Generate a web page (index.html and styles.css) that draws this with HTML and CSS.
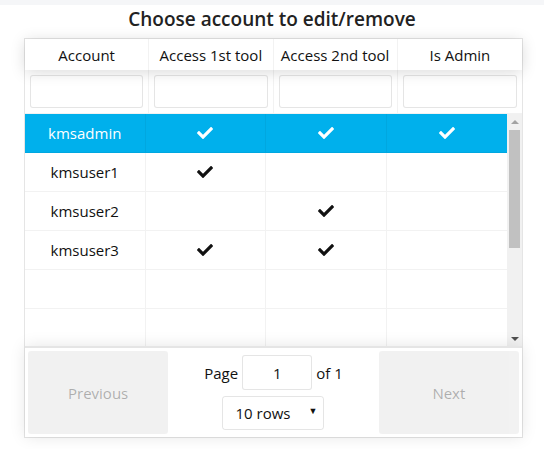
FILE: index.html
```html
<!DOCTYPE html>
<html>
<head>
<meta charset="utf-8">
<link rel="stylesheet" href="styles.css">
</head>
<body>
<div class="topbar"></div>
<h1 class="title">Choose account to edit/remove</h1>
<div class="table">
  <div class="thead">
    <div class="th">Account</div>
    <div class="th">Access 1st tool</div>
    <div class="th">Access 2nd tool</div>
    <div class="th">Is Admin</div>
  </div>
  <div class="filters">
    <div class="fc"><input class="finput" type="text"></div>
    <div class="fc"><input class="finput" type="text"></div>
    <div class="fc"><input class="finput" type="text"></div>
    <div class="fc"><input class="finput" type="text"></div>
  </div>
  <div class="tbody">
    <div class="rows">
      <div class="tr selected">
        <div class="td">kmsadmin</div>
        <div class="td"><svg class="check" viewBox="0 0 512 400"><path d="M173.898 375.404l-166.4-166.4c-9.997-9.997-9.997-26.206 0-36.204l36.203-36.204c9.997-9.998 26.207-9.998 36.204 0L192 248.69 432.095 8.596c9.997-9.997 26.207-9.997 36.204 0l36.203 36.204c9.997 9.997 9.997 26.206 0 36.204l-294.4 294.401c-9.998 9.997-26.207 9.997-36.204-.001z"/></svg></div>
        <div class="td"><svg class="check" viewBox="0 0 512 400"><path d="M173.898 375.404l-166.4-166.4c-9.997-9.997-9.997-26.206 0-36.204l36.203-36.204c9.997-9.998 26.207-9.998 36.204 0L192 248.69 432.095 8.596c9.997-9.997 26.207-9.997 36.204 0l36.203 36.204c9.997 9.997 9.997 26.206 0 36.204l-294.4 294.401c-9.998 9.997-26.207 9.997-36.204-.001z"/></svg></div>
        <div class="td"><svg class="check" viewBox="0 0 512 400"><path d="M173.898 375.404l-166.4-166.4c-9.997-9.997-9.997-26.206 0-36.204l36.203-36.204c9.997-9.998 26.207-9.998 36.204 0L192 248.69 432.095 8.596c9.997-9.997 26.207-9.997 36.204 0l36.203 36.204c9.997 9.997 9.997 26.206 0 36.204l-294.4 294.401c-9.998 9.997-26.207 9.997-36.204-.001z"/></svg></div>
      </div>
      <div class="tr">
        <div class="td">kmsuser1</div>
        <div class="td"><svg class="check" viewBox="0 0 512 400"><path d="M173.898 375.404l-166.4-166.4c-9.997-9.997-9.997-26.206 0-36.204l36.203-36.204c9.997-9.998 26.207-9.998 36.204 0L192 248.69 432.095 8.596c9.997-9.997 26.207-9.997 36.204 0l36.203 36.204c9.997 9.997 9.997 26.206 0 36.204l-294.4 294.401c-9.998 9.997-26.207 9.997-36.204-.001z"/></svg></div>
        <div class="td"></div>
        <div class="td"></div>
      </div>
      <div class="tr">
        <div class="td">kmsuser2</div>
        <div class="td"></div>
        <div class="td"><svg class="check" viewBox="0 0 512 400"><path d="M173.898 375.404l-166.4-166.4c-9.997-9.997-9.997-26.206 0-36.204l36.203-36.204c9.997-9.998 26.207-9.998 36.204 0L192 248.69 432.095 8.596c9.997-9.997 26.207-9.997 36.204 0l36.203 36.204c9.997 9.997 9.997 26.206 0 36.204l-294.4 294.401c-9.998 9.997-26.207 9.997-36.204-.001z"/></svg></div>
        <div class="td"></div>
      </div>
      <div class="tr">
        <div class="td">kmsuser3</div>
        <div class="td"><svg class="check" viewBox="0 0 512 400"><path d="M173.898 375.404l-166.4-166.4c-9.997-9.997-9.997-26.206 0-36.204l36.203-36.204c9.997-9.998 26.207-9.998 36.204 0L192 248.69 432.095 8.596c9.997-9.997 26.207-9.997 36.204 0l36.203 36.204c9.997 9.997 9.997 26.206 0 36.204l-294.4 294.401c-9.998 9.997-26.207 9.997-36.204-.001z"/></svg></div>
        <div class="td"><svg class="check" viewBox="0 0 512 400"><path d="M173.898 375.404l-166.4-166.4c-9.997-9.997-9.997-26.206 0-36.204l36.203-36.204c9.997-9.998 26.207-9.998 36.204 0L192 248.69 432.095 8.596c9.997-9.997 26.207-9.997 36.204 0l36.203 36.204c9.997 9.997 9.997 26.206 0 36.204l-294.4 294.401c-9.998 9.997-26.207 9.997-36.204-.001z"/></svg></div>
        <div class="td"></div>
      </div>
      <div class="tr"><div class="td"></div><div class="td"></div><div class="td"></div><div class="td"></div></div>
      <div class="tr"><div class="td"></div><div class="td"></div><div class="td"></div><div class="td"></div></div>
      <div class="tr"><div class="td"></div><div class="td"></div><div class="td"></div><div class="td"></div></div>
    </div>
    <div class="scrollbar">
      <div class="sb-btn"><span class="tri-up"></span></div>
      <div class="sb-track"><div class="sb-thumb"></div></div>
      <div class="sb-btn"><span class="tri-down"></span></div>
    </div>
  </div>
  <div class="pagination">
    <div class="pside"><button class="pbtn" disabled>Previous</button></div>
    <div class="pcenter">
      <div class="pinfo">Page <input class="pjump" type="text" value="1"> of 1</div>
      <div class="psize"><span>10 rows</span><span class="arrow">▼</span></div>
    </div>
    <div class="pside"><button class="pbtn" disabled>Next</button></div>
  </div>
</div>
</body>
</html>
```

FILE: styles.css
```css
* { box-sizing: border-box; }
html, body { margin: 0; padding: 0; background: #fff; }
body {
  font-family: "Open Sans", "Noto Sans", sans-serif;
  font-size: 15px;
  color: #000;
  width: 544px;
  height: 449px;
  overflow: hidden;
}
.topbar { height: 5px; background: #f5f6f8; }
.title {
  margin: 0;
  padding: 1px 0 6px;
  font-size: 19px;
  font-weight: 600;
  line-height: 26px;
  text-align: center;
  color: #222;
}
.table {
  margin-left: 24px;
  width: 499px;
  border: 1px solid rgba(0,0,0,0.1);
  display: flex;
  flex-direction: column;
}
.thead {
  display: grid;
  grid-template-columns: repeat(4, 1fr);
  height: 31px;
  position: relative;
  z-index: 2;
  background: #fff;
  box-shadow: 0 2px 15px 0 rgba(0,0,0,0.15);
}
.th {
  display: flex;
  align-items: center;
  justify-content: center;
  border-right: 1px solid rgba(0,0,0,0.05);
  white-space: nowrap;
  color: #111;
}
.th:last-child { border-right: 0; }
.filters {
  display: grid;
  grid-template-columns: repeat(4, 1fr);
  border-bottom: 1px solid rgba(0,0,0,0.05);
  position: relative;
  z-index: 1;
}
.fc {
  padding: 5px;
  border-right: 1px solid rgba(0,0,0,0.05);
}
.fc:last-child { border-right: 0; }
.finput {
  display: block;
  width: 100%;
  height: 33px;
  border: 1px solid rgba(0,0,0,0.1);
  border-radius: 3px;
  background: #fff;
  outline: none;
  font: inherit;
}
.tbody {
  display: flex;
  height: 232px;
  overflow: hidden;
}
.rows { flex: 1; min-width: 0; }
.tr {
  display: grid;
  grid-template-columns: repeat(4, 1fr);
  height: 39px;
  border-bottom: 1px solid rgba(0,0,0,0.05);
}
.td {
  display: flex;
  align-items: center;
  justify-content: center;
  border-right: 1px solid rgba(0,0,0,0.05);
  color: #111;
}
.td:last-child { border-right: 0; }
.tr.selected { background: #00b0ec; }
.tr.selected .td { color: #fff; }
.check { width: 16px; height: 12.5px; fill: #111; display: block; }
.tr.selected .check { fill: #fff; }
.scrollbar {
  width: 15px;
  background: #f1f1f1;
  display: flex;
  flex-direction: column;
}
.sb-btn {
  height: 15px;
  display: flex;
  align-items: center;
  justify-content: center;
}
.tri-up {
  width: 0; height: 0;
  border-left: 4px solid transparent;
  border-right: 4px solid transparent;
  border-bottom: 4px solid #a3a3a3;
}
.tri-down {
  width: 0; height: 0;
  border-left: 4px solid transparent;
  border-right: 4px solid transparent;
  border-top: 4px solid #505050;
}
.sb-track { flex: 1; padding: 1px 2px; }
.sb-thumb { height: 118px; background: #c1c1c1; }
.pagination {
  display: flex;
  padding: 3px;
  border-top: 2px solid rgba(0,0,0,0.1);
  box-shadow: 0 0 15px 0 rgba(0,0,0,0.1);
  position: relative;
  z-index: 1;
  background: #fff;
}
.pside { flex: 1; }
.pbtn {
  display: block;
  width: 100%;
  height: 83px;
  border: 0;
  border-radius: 3px;
  padding: 6px;
  font: inherit;
  color: rgba(0,0,0,0.6);
  background: rgba(0,0,0,0.1);
  opacity: 0.5;
}
.pcenter {
  flex: 1.5;
  display: flex;
  flex-direction: column;
  align-items: center;
  justify-content: center;
  gap: 0;
}
.pinfo {
  margin: 3px 10px;
  display: flex;
  align-items: center;
  white-space: nowrap;
  color: #111;
}
.pjump {
  width: 70px;
  height: 35px;
  margin: 0 4px;
  text-align: center;
  border: 1px solid rgba(0,0,0,0.1);
  border-radius: 3px;
  padding: 5px 7px;
  font: inherit;
  color: #111;
  outline: none;
}
.psize {
  margin: 3px 10px;
  width: 102px;
  height: 34px;
  border: 1px solid rgba(0,0,0,0.1);
  border-radius: 3px;
  display: flex;
  align-items: center;
  justify-content: space-between;
  padding: 0 6px 0 12px;
  color: #111;
}
.arrow { font-size: 9px; line-height: 1; margin-top: -5px; }
```
